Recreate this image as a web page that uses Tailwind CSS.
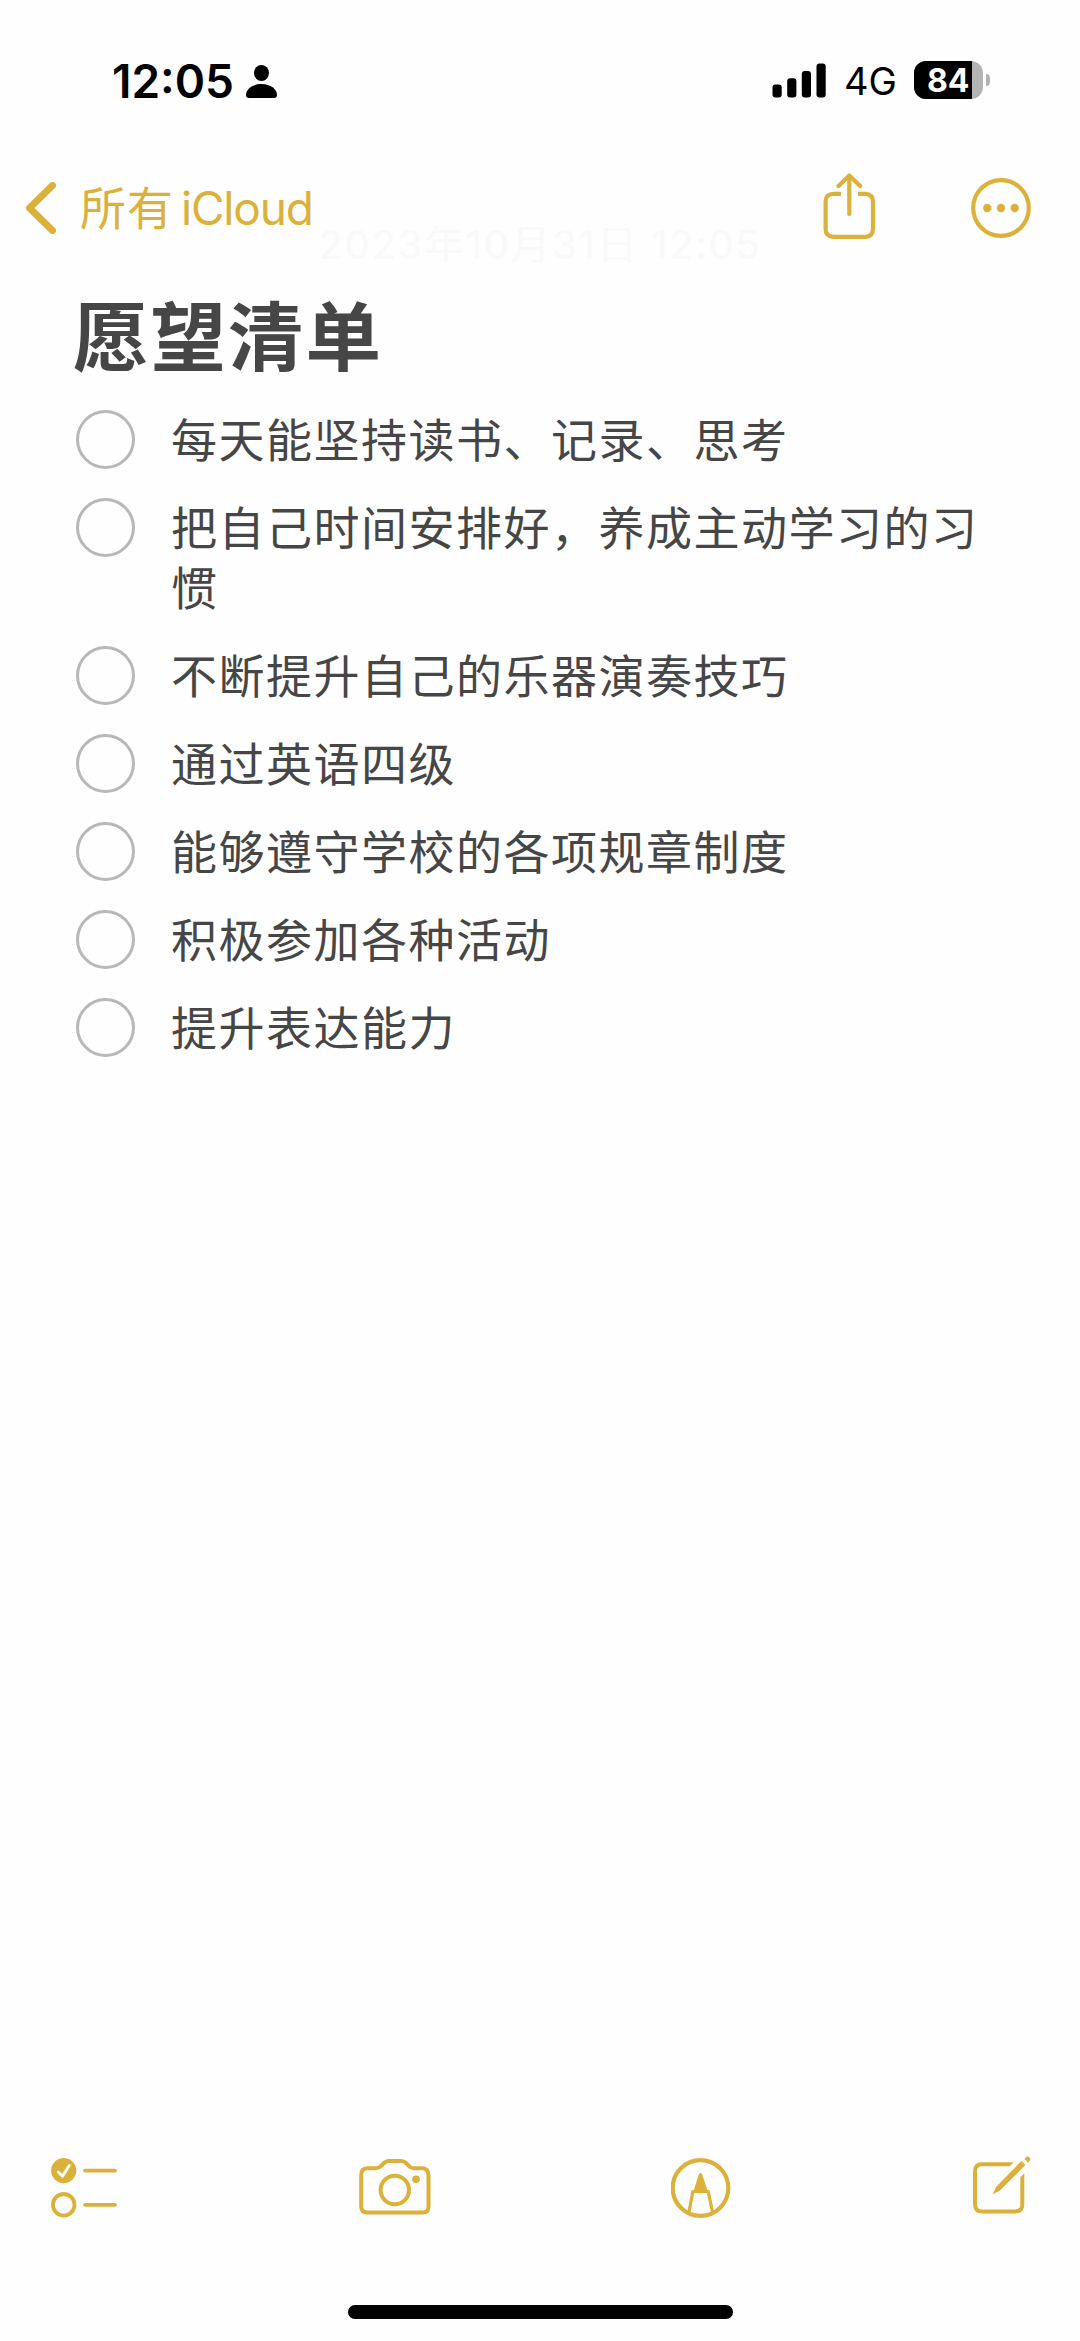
<!DOCTYPE html>
<html lang="zh-CN">
<head>
	<meta charset="UTF-8">
	<meta name="viewport" content="width=device-width, initial-scale=1.0">
	<title>愿望清单</title>
	<script src="https://cdn.jsdelivr.net/npm/@tailwindcss/browser@4"></script>
</head>
<body class="bg-[#fefefe] font-[Inter,'Noto_Sans_CJK_SC',sans-serif]">
	<div class="w-[1080px] h-[2341px] flex flex-col overflow-hidden">
		<!-- status bar -->
		<header class="h-[160px] shrink-0 flex items-center pl-[112px] pr-[90px] text-black">
			<span class="text-[46px] leading-none font-semibold w-[134px] mt-px">12:05</span>
			<svg class="w-[31px] h-[33px] mt-[2px]" viewBox="0 0 31 33" fill="currentColor">
				<ellipse cx="15.5" cy="8" rx="7.5" ry="8" />
				<path d="M3 33C1 33 0 32 0 30C0 24 6.500 19 15.500 19S31 24 31 30C31 32 30 33 28 33Z" />
			</svg>
			<div class="ml-auto flex items-center">
				<svg class="w-[54px] h-[35px]" viewBox="0 0 54 35" fill="currentColor">
					<rect x="0.500" y="21.500" width="9.200" height="13" rx="3" />
					<rect x="15.200" y="15.200" width="9.200" height="19.300" rx="3" />
					<rect x="29.800" y="8" width="9.200" height="26.500" rx="3" />
					<rect x="44.500" y="0.500" width="9.200" height="34" rx="3" />
				</svg>
				<span class="ml-[18px] w-[70px] text-[38px] leading-none mt-[2px]">4G</span>
				<div class="w-[69px] h-[38px] rounded-[12px] overflow-hidden bg-[#b3b3b3] flex">
					<div class="w-[58px] bg-black text-white text-[32px] leading-[39px] font-bold pl-[13px]">84</div>
				</div>
				<div class="ml-[3px] w-[4px] h-[12px] rounded-r-full bg-[#b3b3b3]"></div>
			</div>
		</header>

		<!-- navigation -->
		<nav class="h-[96px] shrink-0 flex items-center pl-[25px] pr-[49px] text-[#dbb13b]">
			<svg class="w-[31px] h-[52px]" viewBox="0 0 31 52" fill="none" stroke="currentColor" stroke-width="7" stroke-linecap="round" stroke-linejoin="round">
				<path d="M27.500 3.500L4.500 26L27.500 48.500" />
			</svg>
			<a href="#" class="ml-[24px] flex items-center leading-none">
				<span class="text-[46px] tracking-[1px] w-[101px]">所有</span>
				<span class="text-[46px] tracking-[-1.200px]">iCloud</span>
			</a>
			<svg class="ml-auto -mt-[4px] w-[53px] h-[67px]" viewBox="0 0 53 67" fill="none" stroke="currentColor" stroke-width="4.200">
				<path d="M18 20.800H10.500Q2.600 20.800 2.600 28.500V56Q2.600 63.800 10.500 63.800H42Q50 63.800 50 56V28.500Q50 20.800 42 20.800H35" />
				<path d="M26.300 2.500V41M15.500 13L26.300 2.500L37.200 13" stroke-linecap="round" stroke-linejoin="round" />
			</svg>
			<svg class="ml-[95px] w-[60px] h-[60px]" viewBox="0 0 60 60" fill="currentColor">
				<circle cx="30" cy="30" r="27.800" fill="none" stroke="currentColor" stroke-width="4.200" />
				<circle cx="16.300" cy="30" r="4.200" />
				<circle cx="30" cy="30" r="4.200" />
				<circle cx="43.700" cy="30" r="4.200" />
			</svg>
		</nav>

		<!-- note -->
		<main class="flex-1 px-[76px] text-[#464646]">
			<p class="-mt-[35px] h-[48px] text-center text-[40px] leading-[48px] tracking-[1.700px] text-[#f9f9f9] whitespace-nowrap">2023年10月31日 12:05</p>
			<h1 class="mt-[20px] -ml-[3px] h-[96px] text-[75.500px] leading-[97px] tracking-[2px] font-bold">愿望清单</h1>
			<ul class="mt-[25px] flex flex-col gap-[27.500px] text-[46px] leading-[60.400px] tracking-[1.500px]">
				<li class="flex items-start gap-[36px]">
					<span class="size-[59px] shrink-0 rounded-full border-3 border-[#b8b8b8]"></span>
					<p>每天能坚持读书、记录、思考</p>
				</li>
				<li class="flex items-start gap-[36px]">
					<span class="size-[59px] shrink-0 rounded-full border-3 border-[#b8b8b8]"></span>
					<p>把自己时间安排好，养成主动学习的习<br>惯</p>
				</li>
				<li class="flex items-start gap-[36px]">
					<span class="size-[59px] shrink-0 rounded-full border-3 border-[#b8b8b8]"></span>
					<p>不断提升自己的乐器演奏技巧</p>
				</li>
				<li class="flex items-start gap-[36px]">
					<span class="size-[59px] shrink-0 rounded-full border-3 border-[#b8b8b8]"></span>
					<p>通过英语四级</p>
				</li>
				<li class="flex items-start gap-[36px]">
					<span class="size-[59px] shrink-0 rounded-full border-3 border-[#b8b8b8]"></span>
					<p>能够遵守学校的各项规章制度</p>
				</li>
				<li class="flex items-start gap-[36px]">
					<span class="size-[59px] shrink-0 rounded-full border-3 border-[#b8b8b8]"></span>
					<p>积极参加各种活动</p>
				</li>
				<li class="flex items-start gap-[36px]">
					<span class="size-[59px] shrink-0 rounded-full border-3 border-[#b8b8b8]"></span>
					<p>提升表达能力</p>
				</li>
			</ul>
		</main>

		<!-- toolbar -->
		<footer class="shrink-0 pb-[22px]">
			<div class="flex justify-between items-start pl-[51px] pr-[49px] h-[149px] text-[#dbb13b]">
				<svg class="mt-[2px] w-[66px] h-[60px]" viewBox="0 0 66 60" fill="none" stroke="currentColor" stroke-width="3.800" stroke-linecap="round" stroke-linejoin="round">
					<circle cx="12.700" cy="12.600" r="12.600" fill="currentColor" stroke="none" />
					<path d="M7.300 14L11.500 18.300L18.300 7.500" stroke="#fefefe" stroke-width="2.800" />
					<circle cx="12.700" cy="46.800" r="10.800" />
					<path d="M34 12.600H64M34 46.800H64" />
				</svg>
				<svg class="mt-[2px] w-[72px] h-[58px]" viewBox="0 0 72 58" fill="none" stroke="currentColor" stroke-width="4" stroke-linejoin="round">
					<path d="M8.500 10.300H17Q20 10.300 22 8L25 5Q27 3 29.500 3H42.500Q45 3 47 5L50 8Q52 10.300 55 10.300H62.500Q69.500 10.300 69.500 17.300V48.500Q69.500 54.500 63.500 54.500H8.500Q2.200 54.500 2.200 48.500V17.300Q2.200 10.300 8.500 10.300Z" />
					<circle cx="35.800" cy="32" r="14.200" />
					<circle cx="57" cy="21.300" r="3.800" fill="currentColor" stroke="none" />
				</svg>
				<svg class="mt-[2px] -ml-[2px] w-[60px] h-[60px]" viewBox="0 0 60 60" fill="none" stroke="currentColor" stroke-width="4.200">
					<circle cx="29.500" cy="30" r="27.800" />
					<path d="M18 54L21.800 33.500H37.200L41.500 54" stroke-width="3.200" stroke-linejoin="round" />
					<path d="M22.500 33L27.800 16.500Q29.500 13 31.200 16.500L36.700 33Z" fill="currentColor" stroke="none" />
				</svg>
				<svg class="w-[58px] h-[59px]" viewBox="0 0 58 59" fill="none" stroke="currentColor" stroke-width="4">
					<path d="M40 8.300H9Q2 8.300 2 15.300V48.500Q2 55.500 9 55.500H42.500Q49.300 55.500 49.300 48.500V18" />
					<path d="M42 5L35 12H43ZM46 22.500L53 15.500V12H46Z" fill="#fefefe" stroke="none" />
					<path d="M48.500 5L52.500 9L27 34.500L19.500 38.500L23 31Z" fill="currentColor" stroke="none" />
					<path d="M54 0.500Q55 0 56 1L57 2Q58 3 57 4.500L55 6.500L51.500 3Z" fill="currentColor" stroke="none" />
				</svg>
			</div>
			<div class="mx-auto w-[385px] h-[14px] rounded-full bg-black"></div>
		</footer>
	</div>
</body>
</html>
